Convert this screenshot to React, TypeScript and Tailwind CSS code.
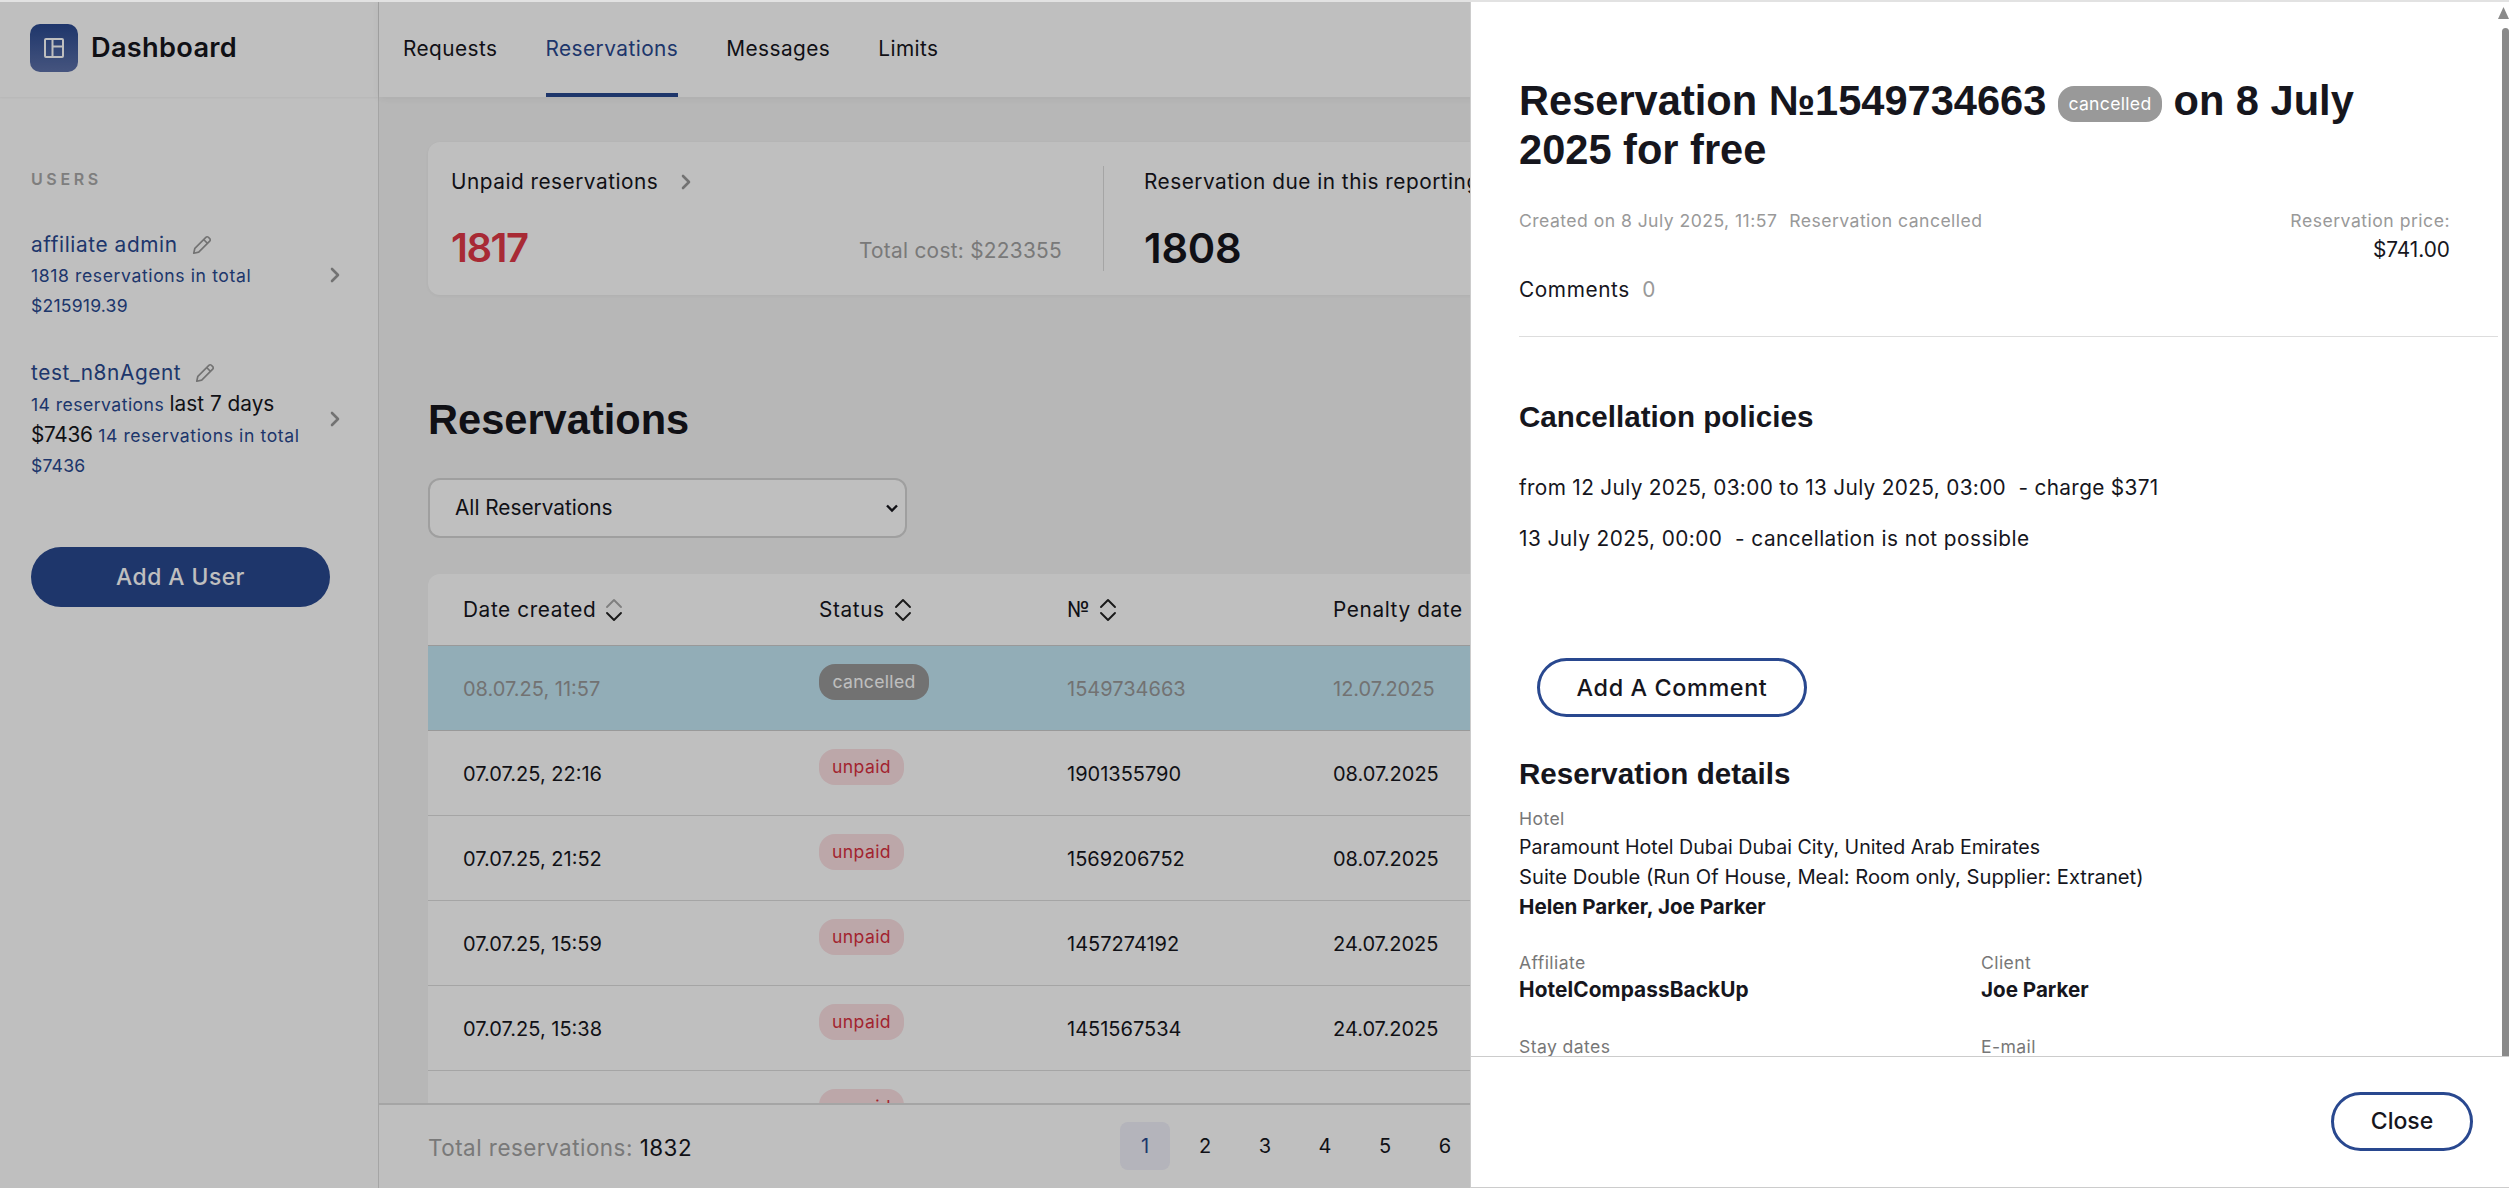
const rows = [
  { date: "07.07.25, 22:16", id: "1901355790", penalty: "08.07.2025" },
  { date: "07.07.25, 21:52", id: "1569206752", penalty: "08.07.2025" },
  { date: "07.07.25, 15:59", id: "1457274192", penalty: "24.07.2025" },
  { date: "07.07.25, 15:38", id: "1451567534", penalty: "24.07.2025" },
  { date: "07.07.25, 15:12", id: "1438820915", penalty: "24.07.2025" },
];

function SortIcon({ faded }: { faded?: boolean }) {
  return (
    <svg width="18" height="26" viewBox="0 0 18 26" fill="none" strokeWidth="1.9" strokeLinecap="round" strokeLinejoin="round" className="shrink-0">
      <path d="M2 10l7-7 7 7" stroke={faded ? "#aaa" : "#222"} />
      <path d="M2 16l7 7 7-7" stroke="#222" />
    </svg>
  );
}

function Chevron({ className }: { className: string }) {
  return (
    <svg viewBox="0 0 12 20" fill="none" stroke="currentColor" strokeWidth="2.6" strokeLinecap="round" strokeLinejoin="round" className={className}>
      <path d="M3 4l6 6-6 6" />
    </svg>
  );
}

function PencilIcon() {
  return (
    <svg width="22" height="22" viewBox="0 0 20 20" fill="none" stroke="#999" strokeWidth="1.5" strokeLinejoin="round" className="shrink-0">
      <path d="M2.5 17.5l1-4.5L13.5 3a1.6 1.6 0 0 1 2.3 0l1.2 1.2a1.6 1.6 0 0 1 0 2.3L7 16.5l-4.5 1z" />
      <path d="M11.5 5l3.5 3.5" />
    </svg>
  );
}

function UnpaidBadge() {
  return (
    <span className="flex h-[36px] w-[85px] items-center justify-center rounded-[16px] bg-[#fbdfe2] text-[17.6px] tracking-[0.4px] text-[#d9303f]">
      unpaid
    </span>
  );
}

function Label({ children }: { children: string }) {
  return <div className="text-[17.6px] leading-[27px] tracking-[0.4px] text-[#777]">{children}</div>;
}

export default function App() {
  return (
    <div className="relative flex h-screen overflow-hidden bg-[#f5f5f5] font-['Inter','Liberation_Sans',sans-serif] text-[#16161d]">
      {/* Sidebar */}
      <aside className="flex w-[379px] shrink-0 flex-col border-r border-[#ddd] bg-white">
        <div className="flex h-[97px] items-center gap-[13px] pl-[30px] shadow-[0_1px_2px_rgba(0,0,0,0.05)]">
          <div className="mb-[2px] flex h-[48px] w-[48px] items-center justify-center rounded-[10px] bg-gradient-to-b from-[#29488f] to-[#5d71a9]">
            <svg width="22" height="22" viewBox="0 0 22 22" fill="none" stroke="white" strokeWidth="2">
              <rect x="2" y="2" width="18" height="18" rx="1" />
              <path d="M9.5 2v18M9.5 9.5H20" />
            </svg>
          </div>
          <span className="text-[27.2px] font-semibold tracking-[0.3px]">Dashboard</span>
        </div>

        <div className="pl-[31px] pr-[37px] pt-[72px]">
          <div className="text-[16px] font-semibold leading-[20px] tracking-[3.6px] text-[#a8a8a8]">USERS</div>

          <div className="mt-[40px] flex items-center justify-between">
            <div className="text-[#29488f]">
              <div className="flex items-center gap-[13px] text-[20.8px] leading-[32px] tracking-[0.6px]">
                affiliate admin
                <PencilIcon />
              </div>
              <div className="text-[17.6px] leading-[30px] tracking-[0.6px]">1818 reservations in total</div>
              <div className="text-[17.6px] leading-[30px] tracking-[0.2px]">$215919.39</div>
            </div>
            <Chevron className="h-[20px] w-[12px] text-[#999]" />
          </div>

          <div className="mt-[36px] flex items-center justify-between">
            <div className="text-[#29488f]">
              <div className="flex items-center gap-[13px] text-[20.8px] leading-[32px] tracking-[0.6px]">
                test_n8nAgent
                <PencilIcon />
              </div>
              <div className="text-[17.6px] leading-[30px] tracking-[0.45px]">
                14 reservations <span className="text-[20.8px] tracking-normal text-[#16161d]">last 7 days</span>
              </div>
              <div className="text-[17.6px] leading-[30px] tracking-[0.6px]">
                <span className="text-[20.8px] tracking-[-0.3px] text-[#16161d]">$7436</span> 14 reservations in total
              </div>
              <div className="text-[17.6px] leading-[30px] tracking-[0.2px]">$7436</div>
            </div>
            <Chevron className="h-[20px] w-[12px] text-[#999]" />
          </div>

          <button className="mt-[66px] h-[60px] w-[299px] rounded-full bg-[#29488f] text-[22.8px] font-medium tracking-[0.5px] text-white">
            Add A User
          </button>
        </div>
      </aside>

      {/* Main column */}
      <main className="flex min-w-0 flex-1 flex-col">
        <nav className="flex h-[97px] shrink-0 gap-[48px] bg-white pl-[24px] text-[20.8px] tracking-[0.45px] shadow-[0_2px_8px_rgba(0,0,0,0.06)]">
          <a className="flex items-center">Requests</a>
          <a className="flex items-center border-b-[4px] border-[#29488f] pt-[4px] text-[#29488f]">Reservations</a>
          <a className="flex items-center">Messages</a>
          <a className="flex items-center">Limits</a>
        </nav>

        <div className="min-h-0 flex-1 overflow-hidden pl-[49px] pr-[40px] pt-[45px]">
          <section className="flex h-[153px] rounded-[12px] bg-white shadow-[0_1px_4px_rgba(0,0,0,0.05)]">
            <div className="flex w-[675px] shrink-0 flex-col justify-between px-[23px] pb-[23px] pt-[24px]">
              <div className="flex items-center gap-[22px] text-[20.8px] leading-[32px] tracking-[0.5px]">
                Unpaid reservations
                <Chevron className="h-[20px] w-[12px] text-[#999]" />
              </div>
              <div className="flex items-end justify-between pr-[18px]">
                <span className="text-[40px] font-semibold leading-[48px] tracking-[-1.5px] text-[#e03847]">1817</span>
                <span className="pb-[5px] text-[20.8px] leading-[32px] tracking-[0.3px] text-[#a2a2a2]">Total cost: $223355</span>
              </div>
            </div>
            <div className="my-[24px] w-px bg-[#ddd]" />
            <div className="flex flex-1 flex-col justify-between px-[40px] pb-[23px] pt-[24px]">
              <div className="text-[20.8px] leading-[32px] tracking-[0.5px]">Reservation due in this reporting period</div>
              <span className="text-[41.6px] font-semibold leading-[48px] tracking-[-0.2px]">1808</span>
            </div>
          </section>

          <h1 className="mt-[101px] font-['Liberation_Sans',sans-serif] text-[41.6px] font-bold leading-[48px]">
            Reservations
          </h1>

          <div className="mt-[34px] flex h-[60px] w-[479px] items-center justify-between rounded-[12px] border-2 border-[#d4d4d4] bg-white pl-[25px] pr-[4px] text-[20.8px]">
            All Reservations
            <svg width="18" height="18" viewBox="0 0 18 18" fill="none" stroke="#16161d" strokeWidth="2.4">
              <path d="M4 6.5l5 5 5-5" />
            </svg>
          </div>

          <div className="mt-[36px] overflow-hidden rounded-t-[12px] bg-white">
            <div className="grid h-[72px] grid-cols-[356px_248px_266px_1fr] items-center border-b border-[#ccc] pl-[35px] text-[20.8px] tracking-[0.6px]">
              <div className="flex items-center gap-[9px]">Date created <SortIcon faded /></div>
              <div className="flex items-center gap-[9px]">Status <SortIcon /></div>
              <div className="flex items-center gap-[9px]">№ <SortIcon /></div>
              <div>Penalty date</div>
            </div>

            <div className="grid h-[85px] grid-cols-[356px_248px_266px_1fr] border-b border-[#ccc] bg-[#c3e7f5] pl-[35px] text-[20px] text-[#999]">
              <div className="pt-[27px] leading-[32px]">08.07.25, 11:57</div>
              <div className="pt-[18px]">
                <span className="flex h-[36px] w-[110px] items-center justify-center rounded-[16px] bg-[#999] text-[17.6px] tracking-[0.3px] text-white">cancelled</span>
              </div>
              <div className="pt-[27px] leading-[32px]">1549734663</div>
              <div className="pt-[27px] leading-[32px]">12.07.2025</div>
            </div>

            {rows.map((r) => (
              <div key={r.id} className="grid h-[85px] grid-cols-[356px_248px_266px_1fr] border-b border-[#ddd] pl-[35px] text-[20px]">
                <div className="pt-[27px] leading-[32px]">{r.date}</div>
                <div className="pt-[18px]"><UnpaidBadge /></div>
                <div className="pt-[27px] leading-[32px]">{r.id}</div>
                <div className="pt-[27px] leading-[32px]">{r.penalty}</div>
              </div>
            ))}
          </div>
        </div>

        <footer className="flex h-[85px] shrink-0 items-start border-t-2 border-[#ddd] bg-white pl-[49px]">
          <div className="w-[692px] shrink-0 pt-[27px] text-[22.4px] leading-[32px] tracking-[0.5px] text-[#a2a2a2]">
            Total reservations: <span className="text-[#16161d]">1832</span>
          </div>
          <div className="mt-[17px] flex text-[20px]">
            <span className="flex h-[48px] w-[50px] items-center justify-center rounded-[8px] bg-[#f0f0fa] text-[#29488f]">1</span>
            {["2", "3", "4", "5", "6"].map((n) => (
              <span key={n} className="ml-[10px] flex h-[48px] w-[50px] items-center justify-center">{n}</span>
            ))}
          </div>
        </footer>
      </main>

      {/* Dim layer under the drawer */}
      <div className="absolute inset-0 bg-black/25" />

      {/* Reservation drawer */}
      <div className="absolute inset-y-0 right-0 flex w-[1039px] flex-col border-b border-l border-[#ccc] bg-white">
        <div className="min-h-0 flex-1 overflow-hidden pl-[48px] pr-[11px] pt-[76px]">
          <h2 className="font-['Liberation_Sans',sans-serif] text-[41.6px] font-bold leading-[49px]">
            Reservation №1549734663{" "}
            <span className="inline-block h-[36px] w-[104px] rounded-[16px] bg-[#999] text-center align-[5px] font-['Inter',sans-serif] text-[17.6px] font-normal leading-[36px] tracking-[0.3px] text-white">
              cancelled
            </span>{" "}
            on 8 July
            <br />
            2025 for free
          </h2>

          <div className="mt-[32px] flex items-start justify-between pr-[48px]">
            <div className="flex gap-[12px] text-[17.6px] leading-[30px] tracking-[0.45px] text-[#999]">
              <span>Created on 8 July 2025, 11:57</span>
              <span>Reservation cancelled</span>
            </div>
            <div className="text-right">
              <div className="text-[17.6px] leading-[30px] tracking-[0.5px] text-[#999]">Reservation price:</div>
              <div className="text-[20.8px] leading-[28px]">$741.00</div>
            </div>
          </div>

          <div className="mt-[11px] text-[20.8px] leading-[30px] tracking-[0.6px]">
            Comments <span className="ml-[6px] text-[#999]">0</span>
          </div>

          <div className="mt-[31px] border-t border-[#ddd]" />

          <h3 className="mt-[60px] font-['Liberation_Sans',sans-serif] text-[29.6px] font-bold leading-[40px]">
            Cancellation policies
          </h3>
          <div className="mt-[36px] text-[20.8px] leading-[30px] tracking-[0.33px]">from 12 July 2025, 03:00 to 13 July 2025, 03:00 &nbsp;- charge $371</div>
          <div className="mt-[21px] text-[20.8px] leading-[30px] tracking-[0.45px]">13 July 2025, 00:00 &nbsp;- cancellation is not possible</div>

          <button className="ml-[18px] mt-[104px] block h-[59px] w-[270px] rounded-full border-[3px] border-[#29488f] text-[23.4px] font-medium tracking-[0.6px]">
            Add A Comment
          </button>

          <h3 className="mt-[39px] font-['Liberation_Sans',sans-serif] text-[29.6px] font-bold leading-[36px]">
            Reservation details
          </h3>

          <div className="mt-[13px]">
            <Label>Hotel</Label>
            <div className="text-[19.6px] leading-[30px]">Paramount Hotel Dubai Dubai City, United Arab Emirates</div>
            <div className="text-[20.2px] leading-[30px]">Suite Double (Run Of House, Meal: Room only, Supplier: Extranet)</div>
            <div className="text-[20.6px] font-bold leading-[30px]">Helen Parker, Joe Parker</div>
          </div>

          <div className="mt-[27px] grid grid-cols-[462px_1fr] gap-y-[30px]">
            <div>
              <Label>Affiliate</Label>
              <div className="text-[20.8px] font-bold leading-[27px] tracking-[0.1px]">HotelCompassBackUp</div>
            </div>
            <div>
              <Label>Client</Label>
              <div className="text-[20.6px] font-bold leading-[27px]">Joe Parker</div>
            </div>
            <div><Label>Stay dates</Label></div>
            <div><Label>E-mail</Label></div>
          </div>
        </div>

        <div className="flex h-[131px] shrink-0 items-start justify-end border-t border-[#ccc] pr-[36px] pt-[35px]">
          <button className="h-[59px] w-[142px] rounded-full border-[3px] border-[#29488f] text-[23px] font-medium">
            Close
          </button>
        </div>

        {/* scrollbar */}
        <svg width="11" height="12" viewBox="0 0 11 12" className="absolute right-0 top-[7px] fill-[#8a8a8a]">
          <path d="M5.5 0L11 12H0z" />
        </svg>
        <div className="absolute right-0 top-[28px] h-[1028px] w-[7px] rounded-t-[4px] bg-[#8a8a8a]" />
      </div>

      <div className="absolute inset-x-0 top-0 h-[2px] bg-[#e2e2e2]" />
    </div>
  );
}
